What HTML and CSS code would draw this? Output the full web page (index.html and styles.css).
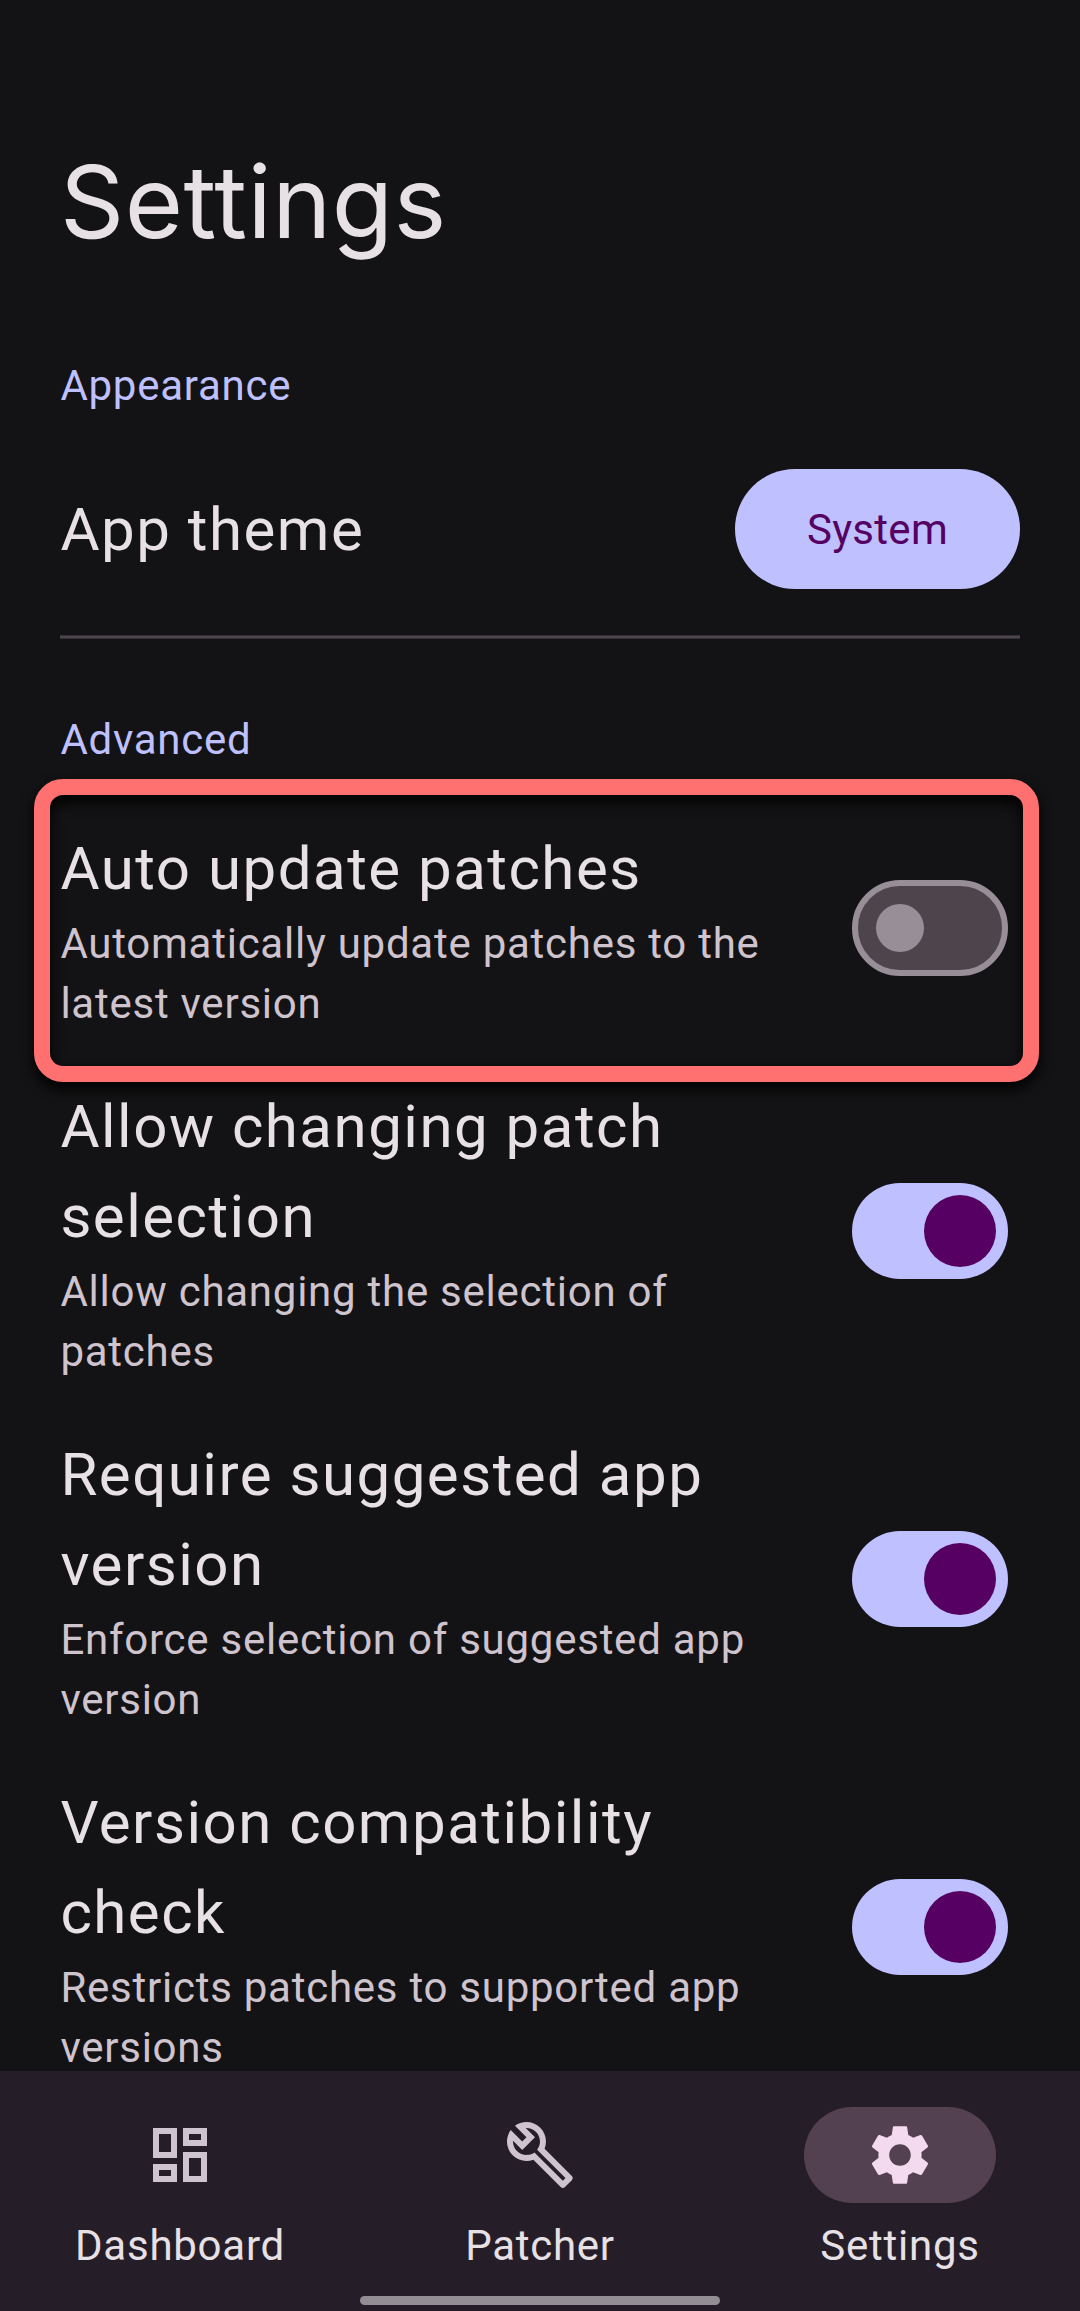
FILE: index.html
```html
<!DOCTYPE html>
<html lang="en">
<head>
<meta charset="utf-8">
<title>Settings</title>
<link rel="stylesheet" href="styles.css">
</head>
<body>
<div class="screen">
  <main class="content">
    <h1 class="title">Settings</h1>
    <h2 class="section">Appearance</h2>
    <div class="theme-row">
      <span class="item-title">App theme</span>
      <button class="theme-button">System</button>
    </div>
    <div class="divider"></div>
    <h2 class="section section-advanced">Advanced</h2>
    <div class="item">
      <div class="item-text">
        <div class="item-title">Auto update patches</div>
        <div class="item-sub">Automatically update patches to the<br>latest version</div>
      </div>
      <div class="switch"><span class="thumb"></span></div>
      <div class="highlight"></div>
    </div>
    <div class="item">
      <div class="item-text">
        <div class="item-title">Allow changing patch<br>selection</div>
        <div class="item-sub">Allow changing the selection of<br>patches</div>
      </div>
      <div class="switch on"><span class="thumb"></span></div>
    </div>
    <div class="item">
      <div class="item-text">
        <div class="item-title">Require suggested app<br>version</div>
        <div class="item-sub">Enforce selection of suggested app<br>version</div>
      </div>
      <div class="switch on"><span class="thumb"></span></div>
    </div>
    <div class="item">
      <div class="item-text">
        <div class="item-title">Version compatibility<br>check</div>
        <div class="item-sub">Restricts patches to supported app<br>versions</div>
      </div>
      <div class="switch on"><span class="thumb"></span></div>
    </div>
  </main>
  <nav class="nav">
    <div class="tab">
      <span class="pill"><svg class="icon" viewBox="0 0 24 24"><path d="M19 5v2h-4V5h4M9 5v6H5V5h4m10 8v6h-4v-6h4M9 17v2H5v-2h4M21 3h-8v6h8V3zM11 3H3v10h8V3zm10 8h-8v10h8V11zm-10 4H3v6h8v-6z"/></svg></span>
      <span class="label">Dashboard</span>
    </div>
    <div class="tab">
      <span class="pill"><svg class="icon" viewBox="0 0 24 24"><path d="M22.61 18.99l-9.08-9.08c.93-2.34.45-5.1-1.44-7C9.79.61 6.21.4 3.66 2.26L7.5 6.11 6.08 7.52 2.25 3.69C.39 6.23.6 9.82 2.9 12.11c1.86 1.86 4.57 2.35 6.89 1.48l9.11 9.11c.39.39 1.02.39 1.41 0l2.3-2.3c.4-.38.4-1.01 0-1.41zm-3 1.6l-9.46-9.46c-.61.45-1.29.72-2 .82-1.36.2-2.79-.21-3.83-1.25C3.37 9.76 2.93 8.5 3 7.26l3.09 3.09 4.24-4.24-3.09-3.09c1.24-.07 2.49.37 3.44 1.31 1.08 1.08 1.49 2.57 1.24 3.96-.12.71-.42 1.37-.88 1.96l9.45 9.45-.88.89z"/></svg></span>
      <span class="label">Patcher</span>
    </div>
    <div class="tab active">
      <span class="pill"><svg class="icon" viewBox="0 0 24 24"><path d="M19.14 12.94c.04-.3.06-.61.06-.94 0-.32-.02-.64-.07-.94l2.03-1.58c.18-.14.23-.41.12-.61l-1.92-3.32c-.12-.22-.37-.29-.59-.22l-2.39.96c-.5-.38-1.03-.7-1.62-.94l-.36-2.54c-.04-.24-.24-.41-.48-.41h-3.84c-.24 0-.43.17-.47.41l-.36 2.54c-.59.24-1.13.57-1.62.94l-2.39-.96c-.22-.08-.47 0-.59.22L2.74 8.87c-.12.21-.08.47.12.61l2.03 1.58c-.05.3-.09.63-.09.94s.02.64.07.94l-2.03 1.58c-.18.14-.23.41-.12.61l1.92 3.32c.12.22.37.29.59.22l2.39-.96c.5.38 1.03.7 1.62.94l.36 2.54c.05.24.24.41.48.41h3.84c.24 0 .44-.17.47-.41l.36-2.54c.59-.24 1.13-.56 1.62-.94l2.39.96c.22.08.47 0 .59-.22l1.92-3.32c.12-.22.07-.47-.12-.61l-2.01-1.58zM12 15.6c-1.98 0-3.6-1.62-3.6-3.6s1.62-3.6 3.6-3.6 3.6 1.62 3.6 3.6-1.62 3.6-3.6 3.6z"/></svg></span>
      <span class="label">Settings</span>
    </div>
    <div class="home-bar"></div>
  </nav>
</div>
</body>
</html>
```
FILE: styles.css
```css
* { box-sizing: border-box; }
body {
  margin: 0;
  background: #131315;
  font-family: Roboto, sans-serif;
  color: #e7e1e5;
}
.screen {
  width: 1080px;
  height: 2311px;
  display: flex;
  flex-direction: column;
  overflow: hidden;
}
.content {
  height: 2071px;
  overflow: hidden;
  padding: 142px 60px 0;
}
.title {
  margin: 0;
  height: 120px;
  font-family: Inter, sans-serif;
  font-size: 100px;
  line-height: 120px;
  font-weight: 400;
  letter-spacing: 0.5px;
}
.section {
  margin: 94px 0 0;
  padding-left: 0.4px;
  font-size: 42px;
  line-height: 60px;
  font-weight: 400;
  letter-spacing: 0.75px;
  color: #bfc0ff;
}
.theme-row {
  display: flex;
  align-items: center;
  justify-content: space-between;
  height: 120px;
  margin-top: 53px;
}
.theme-button {
  width: 285px;
  height: 120px;
  border: 0;
  border-radius: 60px;
  background: #bfc0ff;
  color: #560064;
  font: 400 42px/60px Roboto, sans-serif;
  letter-spacing: 0.3px;
  padding: 1px 0 0;
}
.divider {
  height: 4px;
  margin-top: 46px;
  background: #4d444c;
  border: solid #353035;
  border-width: 1px 0;
}
.section-advanced { margin: 71px 0 29px; }
.item {
  position: relative;
  display: flex;
  align-items: center;
  justify-content: space-between;
  padding: 24px 12px 24px 0;
}
.item-title {
  padding: 1px 0 0 0.4px;
  font-size: 60px;
  line-height: 90px;
  letter-spacing: 1.5px;
}
.item-sub {
  margin-bottom: -1px;
  padding-left: 0.4px;
  font-size: 42px;
  line-height: 60px;
  letter-spacing: 0.75px;
  color: #cfc3cd;
}
.switch {
  width: 156px;
  height: 96px;
  border: 6px solid #988e97;
  border-radius: 48px;
  background: #4d444c;
  display: flex;
  align-items: center;
  padding-left: 18px;
}
.thumb {
  width: 48px;
  height: 48px;
  border-radius: 50%;
  background: #988e97;
}
.switch.on {
  border: 0;
  background: #bfc0ff;
  padding-left: 72px;
}
.switch.on .thumb {
  width: 72px;
  height: 72px;
  background: #560064;
}
.highlight {
  position: absolute;
  left: -26px;
  top: -20px;
  width: 1005px;
  height: 303px;
  border: 16px solid #ff7070;
  border-radius: 29px;
  filter: drop-shadow(0 7px 7px #000);
}
.nav {
  position: relative;
  display: flex;
  height: 240px;
  padding-top: 36px;
  background: #251e29;
}
.tab {
  flex: 1;
  display: flex;
  flex-direction: column;
  align-items: center;
  gap: 13px;
}
.pill {
  display: flex;
  align-items: center;
  justify-content: center;
  width: 192px;
  height: 96px;
  border-radius: 48px;
}
.icon {
  width: 72px;
  height: 72px;
  fill: #cfc3cd;
}
.active .pill { background: #534152; }
.active .icon { fill: #f3daef; }
.label {
  font-size: 42px;
  line-height: 60px;
  letter-spacing: 0.75px;
}
.home-bar {
  position: absolute;
  left: 360px;
  bottom: 6px;
  width: 360px;
  height: 9px;
  border-radius: 5px;
  background: #938e94;
}
```
